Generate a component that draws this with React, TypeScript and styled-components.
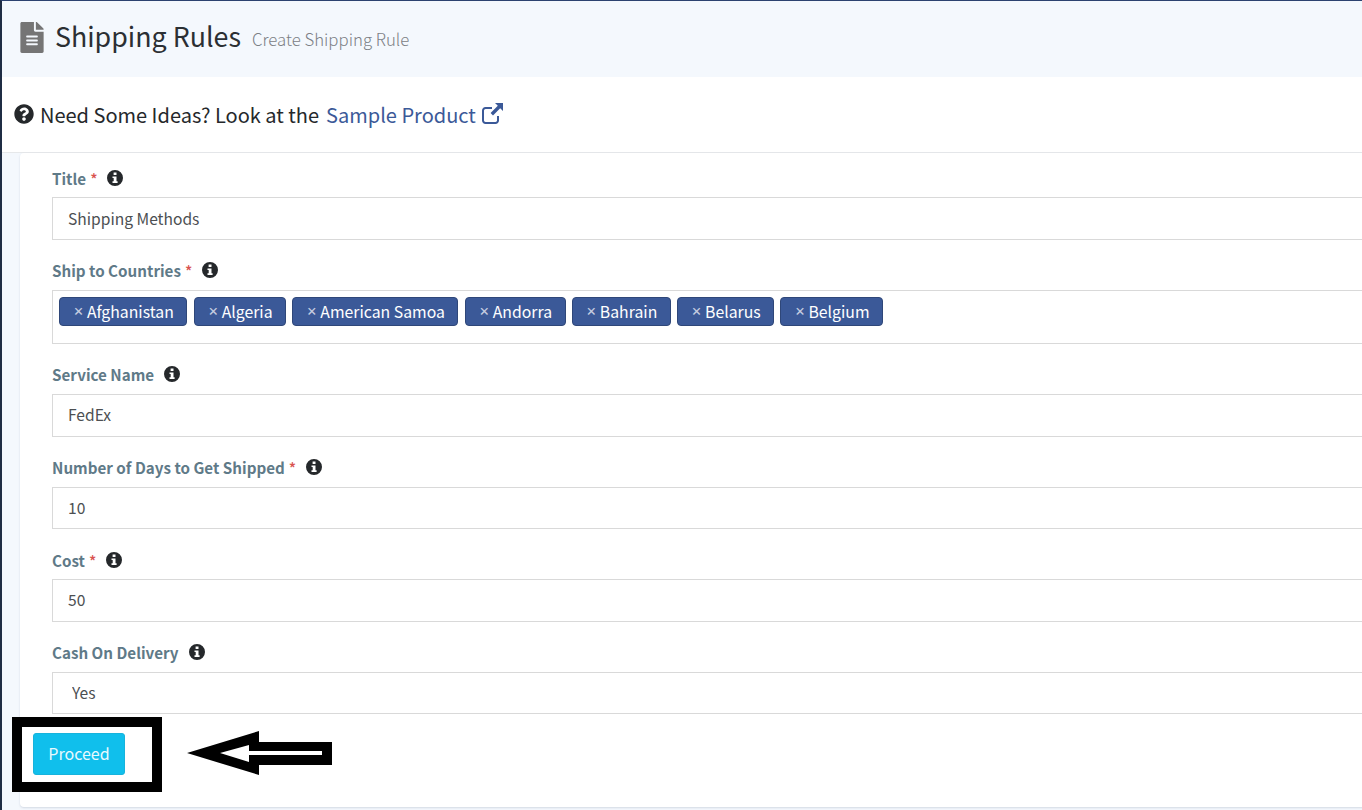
import React, { FC } from "react";
import { FaFileAlt, FaQuestionCircle } from "react-icons/fa";
import styled, { createGlobalStyle } from "styled-components";

const GlobalStyle = createGlobalStyle`
  html, body {
    margin: 0;
    padding: 0;
    height: 100%;
    overflow: hidden;
    background: #f4f8fd;
  }
  body {
    font-family: "Noto Sans CJK SC", "Noto Sans", sans-serif;
  }
`;

const Page = styled.div`
  position: relative;
  width: 1362px;
  height: 810px;
  box-sizing: border-box;
  overflow: hidden;
  border-top: 1px solid #2c4270;
  border-left: 2px solid #1f2d44;
  background: #f4f8fd;
`;

const Header = styled.header`
  height: 76px;
  display: flex;
  align-items: center;
  padding: 0 0 6px 17px;
  box-sizing: border-box;
  background: #f4f8fd;
`;

const HeaderIcon = styled(FaFileAlt)`
  width: 26px;
  height: 31px;
  color: #757575;
  margin: 2px 10px 0 0;
`;

const PageTitle = styled.h1`
  margin: 0;
  font-size: 26.8px;
  line-height: 40px;
  font-weight: 400;
  color: #2b2f33;
`;

const PageSubtitle = styled.small`
  margin-left: 11px;
  margin-top: 6px;
  font-size: 16.8px;
  font-weight: 300;
  color: #7c8085;
`;

const Notice = styled.div`
  height: 76px;
  box-sizing: border-box;
  display: flex;
  align-items: center;
  padding: 0 0 1px 12px;
  background: #fff;
  border-bottom: 1px solid #e6e8ea;
  font-size: 20px;
  color: #25282b;
`;

const NoticeIcon = styled(FaQuestionCircle)`
  width: 20px;
  height: 20px;
  margin: 0 6px 0 0;
  color: #25282b;
`;

const SampleLink = styled.a`
  color: #3b5998;
  margin-left: 7px;
  text-decoration: none;
`;

const LinkIcon = styled.svg`
  width: 24px;
  height: 24px;
  margin: -6px 0 0 4px;
  vertical-align: middle;
  color: #3b5998;
`;

const Card = styled.section`
  width: 1400px;
  height: 654px;
  margin-left: 18px;
  padding: 13.2px 0 0 32px;
  box-sizing: border-box;
  background: #fff;
  border-radius: 4px;
  box-shadow: 0 1px 2px rgba(60, 80, 110, 0.18);
`;

const Group = styled.div`
  margin-bottom: 19px;
`;

const Label = styled.label`
  display: flex;
  align-items: center;
  height: 24px;
  margin-bottom: 7px;
  padding-bottom: 1px;
  box-sizing: border-box;
  font-size: 15.2px;
  font-weight: 700;
  color: #5f7a88;
`;

const Required = styled.span`
  color: #d9534f;
  font-weight: 500;
  margin-left: 4px;
`;

const InfoSvg = styled.svg`
  width: 16px;
  height: 16px;
  margin-left: 10px;
  color: #25282b;
`;

const TextInput = styled.input`
  display: block;
  width: 100%;
  height: 42.67px;
  box-sizing: border-box;
  padding: 0 15px 2px;
  border: 1px solid #d9d9d9;
  background: #fff;
  font: inherit;
  font-size: 15.6px;
  color: #4c4f52;
  outline: none;
`;

const SelectInput = styled.select`
  display: block;
  width: 100%;
  height: 42.67px;
  box-sizing: border-box;
  padding: 0 19px 2px;
  border: 1px solid #d9d9d9;
  border-radius: 0;
  background: #fff;
  appearance: none;
  font: inherit;
  font-size: 15.6px;
  color: #4c4f52;
  outline: none;
`;

const TagBox = styled.div`
  display: flex;
  align-items: flex-start;
  gap: 6.3px;
  height: 54px;
  box-sizing: border-box;
  padding: 6px 6px;
  border: 1px solid #d9d9d9;
`;

const Tag = styled.span`
  display: inline-flex;
  align-items: center;
  height: 29px;
  box-sizing: border-box;
  padding: 0 12.5px 0 13px;
  background: #3b5998;
  border: 1px solid #2f4779;
  border-radius: 4px;
  color: #fff;
  font-size: 15.8px;
  white-space: nowrap;
`;

const TagRemove = styled.span`
  width: 8px;
  margin-right: 6px;
  text-align: center;
  font-size: 11px;
  font-weight: 900;
  color: #c6cde0;
`;

const ProceedButton = styled.button`
  display: block;
  width: 92px;
  height: 42px;
  margin: 0 0 0 -19px;
  padding: 0 0 2px;
  border: 1px solid #17b3dc;
  border-radius: 3px;
  background: #10bfec;
  color: #e8f9fe;
  font: inherit;
  font-size: 16px;
`;

// annotation drawn over the screenshot
const HighlightBox = styled.div`
  position: absolute;
  left: 10px;
  top: 716px;
  width: 150px;
  height: 75px;
  box-sizing: border-box;
  border: 10px solid #000;
`;

const Arrow = styled.svg`
  position: absolute;
  left: 183px;
  top: 729px;
`;

const tags = [
  "Afghanistan",
  "Algeria",
  "American Samoa",
  "Andorra",
  "Bahrain",
  "Belarus",
  "Belgium",
];

const Info: FC = () => (
  <InfoSvg viewBox="0 0 16 16">
    <path
      fillRule="evenodd"
      fill="currentColor"
      d="M8 0a8 8 0 1 1 0 16A8 8 0 0 1 8 0zM6.600 2.600v2.500h2.900V2.600zM5.500 6.400v1.700h1.200v3.200H5.500V13h5.100v-1.700H9.500V6.400z"
    />
  </InfoSvg>
);

const App: FC = () => {
  return (
    <Page>
      <GlobalStyle />
      <Header>
        <HeaderIcon />
        <PageTitle>Shipping Rules</PageTitle>
        <PageSubtitle>Create Shipping Rule</PageSubtitle>
      </Header>
      <Notice>
        <NoticeIcon />
        Need Some Ideas? Look at the
        <SampleLink href="#">
          Sample Product
          <LinkIcon viewBox="0 0 24 24" fill="none">
            <path
              d="M18 14v4.500a2.500 2.500 0 0 1-2.500 2.500h-10A2.500 2.500 0 0 1 3 18.500v-10A2.500 2.500 0 0 1 5.500 6H12"
              stroke="currentColor"
              strokeWidth="2"
            />
            <path d="M15 1h8v8l-2.800-2.800-7.200 7.200-2.400-2.400 7.200-7.200z" fill="currentColor" />
          </LinkIcon>
        </SampleLink>
      </Notice>
      <Card>
        <Group>
          <Label>
            Title<Required>*</Required>
            <Info />
          </Label>
          <TextInput readOnly value="Shipping Methods" />
        </Group>
        <Group>
          <Label>
            Ship to Countries<Required>*</Required>
            <Info />
          </Label>
          <TagBox>
            {tags.map((tag) => (
              <Tag key={tag}>
                <TagRemove>×</TagRemove>
                {tag}
              </Tag>
            ))}
          </TagBox>
        </Group>
        <Group>
          <Label>
            Service Name
            <Info />
          </Label>
          <TextInput readOnly value="FedEx" />
        </Group>
        <Group>
          <Label>
            Number of Days to Get Shipped<Required>*</Required>
            <Info />
          </Label>
          <TextInput readOnly value="10" />
        </Group>
        <Group>
          <Label>
            Cost<Required>*</Required>
            <Info />
          </Label>
          <TextInput readOnly value="50" />
        </Group>
        <Group>
          <Label>
            Cash On Delivery
            <Info />
          </Label>
          <SelectInput defaultValue="yes">
            <option value="yes">Yes</option>
            <option value="no">No</option>
          </SelectInput>
        </Group>
        <ProceedButton>Proceed</ProceedButton>
      </Card>
      <HighlightBox />
      <Arrow width="150" height="50" viewBox="0 0 150 50">
        <polygon points="2,23 74,1 74,12 147,12 147,35 74,35 74,45" fill="#000" />
        <polygon points="35,23 64,15 64,21 137,21 137,25 64,25 64,32" fill="#fff" />
      </Arrow>
    </Page>
  );
};

export default App;
